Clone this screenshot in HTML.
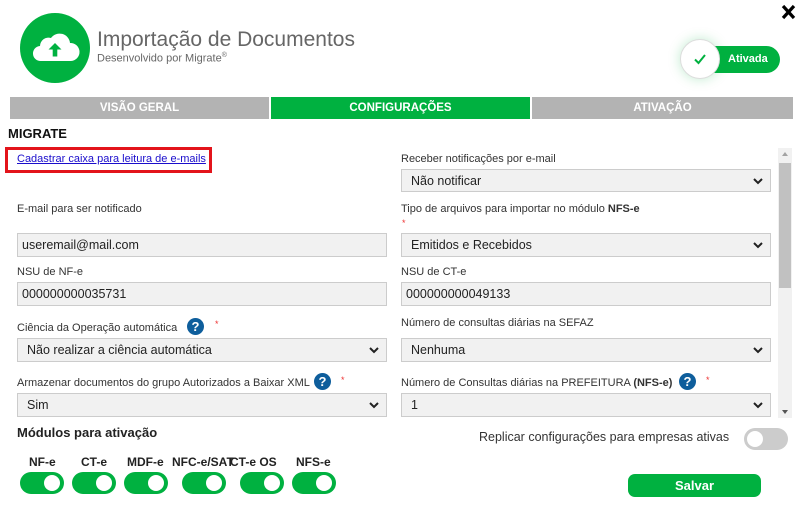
<!DOCTYPE html>
<html><head><meta charset="utf-8"><style>
*{box-sizing:border-box;margin:0;padding:0}
body{width:800px;height:505px;background:#fff;font-family:"Liberation Sans",Arial,sans-serif;position:relative;overflow:hidden;color:#333}
.a{position:absolute;white-space:nowrap}
.lbl{font-size:11px;color:#333}
.box{position:absolute;background:#f1f1f1;border:1px solid #ccc;font-size:12.5px;color:#222;padding:0 0 0 8px;display:flex;align-items:center}
.box.sel{padding-left:9px}
.chev{position:absolute;right:6px;top:50%;margin-top:-4px;width:12px;height:8px}
.q{position:absolute;width:17px;height:17px;border-radius:50%;background:#0e5e9c;color:#fff;font-weight:bold;font-size:13px;text-align:center;line-height:17px}
.st{position:absolute;color:#e33;font-size:9px}
.tab{position:absolute;top:97px;height:22px;color:#fff;font-weight:bold;font-size:11.5px;text-align:center;line-height:22px;background:#b3b3b3}
.tg{position:absolute;top:472px;width:44px;height:22px;border-radius:11px;background:#00b140}
.tg::after{content:"";position:absolute;right:4px;top:3px;width:16px;height:16px;border-radius:50%;background:#fff}
.ml{position:absolute;top:455px;font-size:12px;font-weight:bold;color:#222}
</style></head><body>
<svg class="a" style="left:20px;top:13px" width="70" height="70" viewBox="0 0 70 70">
<circle cx="35" cy="35" r="35" fill="#00b140"/>
<path d="M21 48 a7.5 7.5 0 0 1 -1 -15 a8.5 8.5 0 0 1 11 -8 a10.5 10.5 0 0 1 19 5 a7.5 7.5 0 0 1 1 18 z" fill="#fff"/>
<path d="M35 30 l-6.5 6.5 h4.2 v7 h4.6 v-7 h4.2 z" fill="#00b140"/>
</svg>
<div class="a" style="left:97px;top:28px;font-size:21px;color:#666">Importação de Documentos</div>
<div class="a" style="left:97px;top:52px;font-size:11px;color:#666">Desenvolvido por Migrate<sup style="font-size:7px">®</sup></div>
<svg class="a" style="left:781px;top:4px" width="15" height="16" viewBox="0 0 15 16"><path d="M2 2 L13 14 M13 2 L2 14" stroke="#000" stroke-width="3.2"/></svg>
<div class="a" style="left:690px;top:46px;width:90px;height:27px;border-radius:14px;background:#00b140"></div>
<div class="a" style="left:728px;top:53px;color:#fff;font-weight:bold;font-size:11px">Ativada</div>
<div class="a" style="left:680px;top:39px;width:40px;height:40px;border-radius:50%;background:#fff;border:1px solid #ddd;box-shadow:0 0 12px rgba(0,177,64,.25)"></div>
<svg class="a" style="left:693px;top:52px" width="14" height="14" viewBox="0 0 14 14"><path d="M2 7.5 L5.5 11 L12 3" stroke="#00b140" stroke-width="2" fill="none"/></svg>
<div class="tab" style="left:10px;width:259px">VISÃO GERAL</div>
<div class="tab" style="left:271px;width:259px;background:#00b140">CONFIGURAÇÕES</div>
<div class="tab" style="left:532px;width:261px">ATIVAÇÃO</div>
<div class="a" style="left:8px;top:126px;font-size:13px;font-weight:bold;color:#111">MIGRATE</div>
<div class="a" style="left:5px;top:147px;width:207px;height:26px;border:3px solid #e3141b"></div>
<div class="a" style="left:17px;top:153px;font-size:11px;color:#1a0dcc;text-decoration:underline">Cadastrar caixa para leitura de e-mails</div>
<div class="a" style="left:778px;top:148px;width:14px;height:270px;background:#f1f1f1"></div>
<div class="a" style="left:779px;top:163px;width:12px;height:125px;background:#c1c1c1"></div>
<div class="a" style="left:782px;top:152px;width:0;height:0;border:3px solid transparent;border-bottom:4px solid #a3a3a3;border-top:0"></div>
<div class="a" style="left:782px;top:410px;width:0;height:0;border:3px solid transparent;border-top:4px solid #555;border-bottom:0"></div>

<div class="a lbl" style="left:401px;top:153px">Receber notificações por e-mail</div>
<div class="box sel" style="left:401px;top:169px;width:370px;height:23px">Não notificar<svg class="chev" viewBox="0 0 12 8"><path d="M2 2 L6 6 L10 2" stroke="#222" stroke-width="2" fill="none"/></svg></div>
<div class="a lbl" style="left:17px;top:203px">E-mail para ser notificado</div>
<div class="a lbl" style="left:401px;top:203px">Tipo de arquivos para importar no módulo <b>NFS-e</b></div>
<div class="st" style="left:402px;top:218px">*</div>
<div class="box" style="left:17px;top:233px;width:370px;height:24px;padding-left:4px">useremail@mail.com</div>
<div class="box sel" style="left:401px;top:233px;width:370px;height:24px">Emitidos e Recebidos<svg class="chev" viewBox="0 0 12 8"><path d="M2 2 L6 6 L10 2" stroke="#222" stroke-width="2" fill="none"/></svg></div>
<div class="a lbl" style="left:17px;top:266px">NSU de NF-e</div>
<div class="a lbl" style="left:401px;top:266px">NSU de CT-e</div>
<div class="box" style="left:17px;top:282px;width:370px;height:24px;padding-left:4px">000000000035731</div>
<div class="box" style="left:401px;top:282px;width:370px;height:24px;padding-left:4px">000000000049133</div>
<div class="a lbl" style="left:17px;top:322px">Ciência da Operação automática</div>
<div class="q" style="left:187px;top:318px">?</div><div class="st" style="left:215px;top:319px">*</div>
<div class="a lbl" style="left:401px;top:317px">Número de consultas diárias na SEFAZ</div>
<div class="box sel" style="left:17px;top:338px;width:370px;height:24px">Não realizar a ciência automática<svg class="chev" viewBox="0 0 12 8"><path d="M2 2 L6 6 L10 2" stroke="#222" stroke-width="2" fill="none"/></svg></div>
<div class="box sel" style="left:401px;top:338px;width:370px;height:24px">Nenhuma<svg class="chev" viewBox="0 0 12 8"><path d="M2 2 L6 6 L10 2" stroke="#222" stroke-width="2" fill="none"/></svg></div>
<div class="a lbl" style="left:17px;top:377px">Armazenar documentos do grupo Autorizados a Baixar XML</div>
<div class="q" style="left:314px;top:373px">?</div><div class="st" style="left:341px;top:375px">*</div>
<div class="a lbl" style="left:401px;top:377px">Número de Consultas diárias na PREFEITURA <b>(NFS-e)</b></div>
<div class="q" style="left:679px;top:373px">?</div><div class="st" style="left:706px;top:375px">*</div>
<div class="box sel" style="left:17px;top:393px;width:370px;height:24px">Sim<svg class="chev" viewBox="0 0 12 8"><path d="M2 2 L6 6 L10 2" stroke="#222" stroke-width="2" fill="none"/></svg></div>
<div class="box sel" style="left:401px;top:393px;width:370px;height:24px">1<svg class="chev" viewBox="0 0 12 8"><path d="M2 2 L6 6 L10 2" stroke="#222" stroke-width="2" fill="none"/></svg></div>

<div class="a" style="left:17px;top:425px;font-size:13px;font-weight:bold;color:#222">Módulos para ativação</div>
<div class="a" style="left:479px;top:430px;font-size:12.5px;color:#333">Replicar configurações para empresas ativas</div>
<div class="a" style="left:744px;top:428px;width:44px;height:22px;border-radius:11px;background:#ccc"></div>
<div class="a" style="left:747px;top:431px;width:16px;height:16px;border-radius:50%;background:#fff"></div>
<div class="ml" style="left:29px">NF-e</div>
<div class="ml" style="left:81px">CT-e</div>
<div class="ml" style="left:127px">MDF-e</div>
<div class="ml" style="left:172px">NFC-e/SAT</div>
<div class="ml" style="left:230px">CT-e OS</div>
<div class="ml" style="left:296px">NFS-e</div>
<div class="tg" style="left:20px"></div>
<div class="tg" style="left:72px"></div>
<div class="tg" style="left:124px"></div>
<div class="tg" style="left:182px"></div>
<div class="tg" style="left:240px"></div>
<div class="tg" style="left:292px"></div>
<div class="a" style="left:628px;top:474px;width:133px;height:23px;border-radius:7px;background:#00b140;color:#fff;font-weight:bold;font-size:13px;text-align:center;line-height:23px">Salvar</div>
</body></html>
